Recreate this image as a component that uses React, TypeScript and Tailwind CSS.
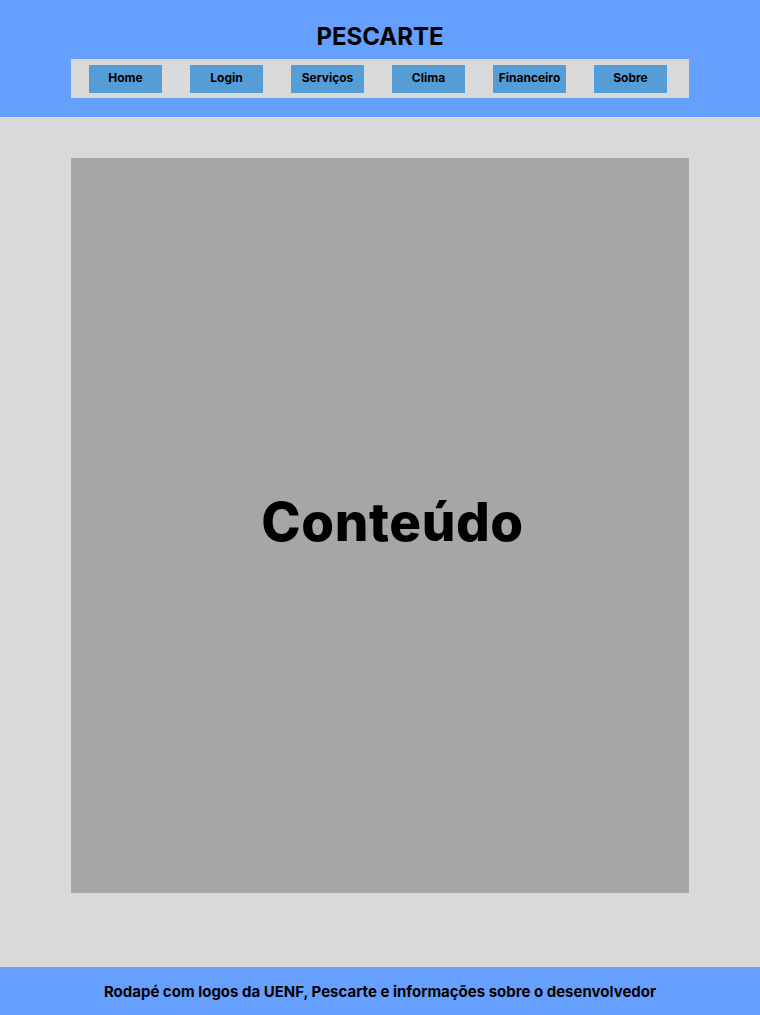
import React from "react";

const links = ["Home", "Login", "Serviços", "Clima", "Financeiro", "Sobre"];

function App() {
  return (
    <div className="flex flex-col min-h-[1015px] bg-[#d9d9d9] font-['Inter',sans-serif] text-black">
      <header className="bg-[#66a0ff] h-[117px] flex flex-col items-center pt-[22px]">
        <h1 className="text-[24px] leading-[30px] font-bold">PESCARTE</h1>
        <nav className="mt-[7px] w-[618px] h-[39px] bg-[#d9d9d9] flex items-center pl-[18px] gap-[28px]">
          {links.map((l) => (
            <a
              key={l}
              href="#"
              className="w-[73px] h-[28px] bg-[#559dd6] flex items-center justify-center text-[12px] leading-[15px] font-bold pb-[2px]"
            >
              {l}
            </a>
          ))}
        </nav>
      </header>
      <main className="flex-1 flex justify-center pt-[41px] pb-[74px]">
        <div className="w-[618px] h-[735px] bg-[#a6a6a6] flex items-center justify-center pl-[25px] pb-[6px]">
          <span className="text-[53px] font-extrabold tracking-[0.6px]">Conteúdo</span>
        </div>
      </main>
      <footer className="bg-[#66a0ff] h-[48px] flex items-center justify-center">
        <p className="text-[15px] font-bold pt-[2px]">
          Rodapé com logos da UENF, Pescarte e informações sobre o desenvolvedor
        </p>
      </footer>
    </div>
  );
}

export default App;
